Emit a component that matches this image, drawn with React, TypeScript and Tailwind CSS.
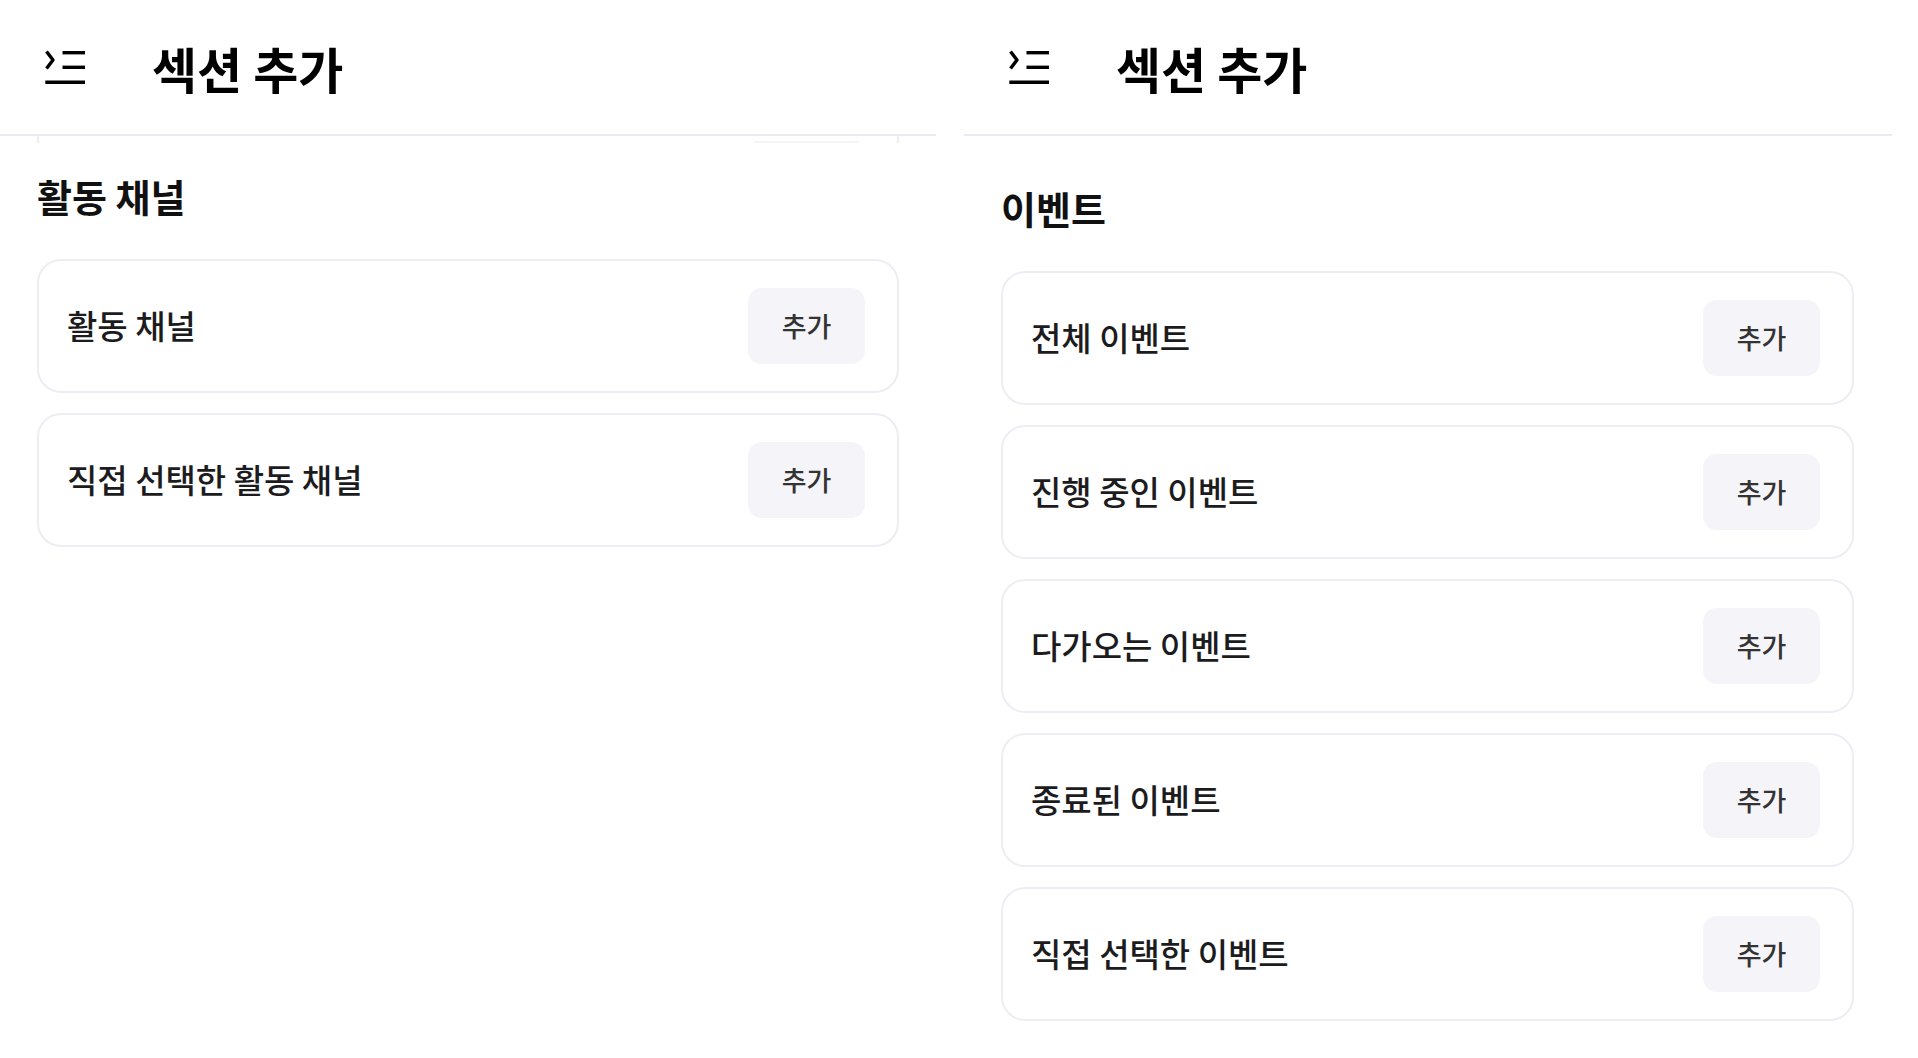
import React from "react";

const FONT = "font-['Noto_Sans_CJK_KR','Noto_Sans',sans-serif]";

function IndentIcon() {
  return (
    <svg width="41" height="34" viewBox="0 0 41 34" fill="none" stroke="#000" strokeWidth="3.4">
      <polyline points="1.5,1.5 8,10 1.5,18.5" strokeLinejoin="round" />
      <path d="M17.5 2.7H40" />
      <path d="M17.5 17.3H40" />
      <path d="M0.3 32.2H40" />
    </svg>
  );
}

function Header() {
  return (
    <div className="flex h-[136px] items-center border-b-2 border-[#eaeaf2] pl-[45px]">
      <IndentIcon />
      <h1 className="ml-[66px] text-[49px] font-bold leading-none text-black">섹션 추가</h1>
    </div>
  );
}

function Row({ label }: { label: string }) {
  return (
    <div className="flex h-[134px] items-center justify-between rounded-[24px] border-2 border-[#ededf3] bg-white pl-[28px] pr-[32px]">
      <span className="text-[33px] font-medium text-[#1c1c1e]">{label}</span>
      <button className="flex h-[76px] w-[117px] items-center justify-center rounded-[14px] bg-[#f4f4f9] text-[27px] font-medium text-[#333]">
        추가
      </button>
    </div>
  );
}

function Section({ title, items, right }: { title: string; items: string[]; right: string }) {
  return (
    <div className={`pl-[37px] ${right}`}>
      <h2 className="text-[38px] font-bold leading-[51px] text-[#111]">{title}</h2>
      <div className="mt-[38px] flex flex-col gap-[20px]">
        {items.map((it) => (
          <Row key={it} label={it} />
        ))}
      </div>
    </div>
  );
}

export default function App() {
  return (
    <div className={`flex h-[1058px] w-[1918px] gap-[28px] overflow-hidden bg-white ${FONT}`}>
      <div className="w-[936px] shrink-0">
        <Header />
        {/* sliver of a card scrolled under the header */}
        <div className="mx-[37px] flex h-[7px] justify-end border-x-2 border-[#ededf3] pr-[38px]">
          <div className="mt-[5px] h-[2px] w-[105px] bg-[#f4f4f9]" />
        </div>
        <div className="pt-[27px]">
          <Section title="활동 채널" items={["활동 채널", "직접 선택한 활동 채널"]} right="pr-[37px]" />
        </div>
      </div>
      <div className="w-[928px] shrink-0">
        <Header />
        <div className="pt-[46px]">
          <Section
            title="이벤트"
            items={["전체 이벤트", "진행 중인 이벤트", "다가오는 이벤트", "종료된 이벤트", "직접 선택한 이벤트"]}
            right="pr-[38px]"
          />
        </div>
      </div>
    </div>
  );
}
